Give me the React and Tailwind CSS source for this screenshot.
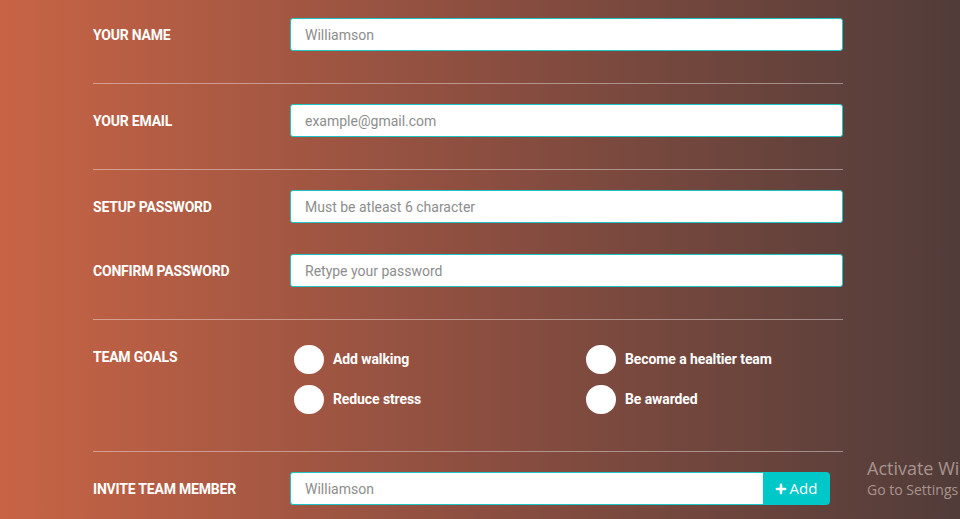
import React from 'react';
import { Plus } from 'lucide-react';

const font = { fontFamily: 'Roboto, "Liberation Sans", sans-serif' };

function Label({ children, className = '' }) {
    return (
        <div className={`w-[197px] shrink-0 text-[14px] font-bold uppercase tracking-[-0.2px] text-white ${className}`}>
            {children}
        </div>
    );
}

function Field({ placeholder }) {
    return (
        <input
            className="h-[33px] flex-1 rounded-[3px] border border-[#1cc6c6] bg-white px-[14px] text-[14px] text-[#555] placeholder:text-[#8d8d8d] outline-none"
            placeholder={placeholder}
        />
    );
}

function Goal({ text }) {
    return (
        <div className="flex items-center">
            <span className="ml-[4px] h-[29px] w-[30px] rounded-full bg-white" />
            <span className="ml-[9px] text-[14px] font-bold tracking-[-0.1px] text-white">{text}</span>
        </div>
    );
}

export default function App() {
    return (
        <div className="relative h-[519px] w-full overflow-hidden bg-gradient-to-r from-[#c86445] via-[#8c4e40] to-[#513c39]" style={font}>
            <div className="ml-[93px] w-[750px]">
                <div className="flex items-center pt-[18px] pb-[32px]">
                    <Label className="pt-[1px]">Your name</Label>
                    <Field placeholder="Williamson" />
                </div>
                <div className="border-t border-white/40" />

                <div className="flex items-center pt-[20px] pb-[32px]">
                    <Label className="pt-[1px]">Your email</Label>
                    <Field placeholder="example@gmail.com" />
                </div>
                <div className="border-t border-white/40" />

                <div className="flex flex-col gap-[31px] pt-[20px] pb-[32px]">
                    <div className="flex items-center">
                        <Label className="pt-[1px]">Setup password</Label>
                        <Field placeholder="Must be atleast 6 character" />
                    </div>
                    <div className="flex items-center">
                        <Label className="pt-[1px]">Confirm password</Label>
                        <Field placeholder="Retype your password" />
                    </div>
                </div>
                <div className="border-t border-white/40" />

                <div className="flex pt-[25px] pb-[37px]">
                    <Label className="pt-[1px] leading-[22px]">Team goals</Label>
                    <div className="grid flex-1 grid-cols-[292px_1fr] gap-y-[11px]">
                        <Goal text="Add walking" />
                        <Goal text="Become a healtier team" />
                        <Goal text="Reduce stress" />
                        <Goal text="Be awarded" />
                    </div>
                </div>
                <div className="border-t border-white/40" />

                <div className="flex items-center pt-[20px]">
                    <Label className="pt-[1px]">Invite team member</Label>
                    <div className="mr-[13px] flex flex-1">
                        <input
                            className="h-[33px] flex-1 rounded-l-[3px] border border-r-0 border-[#1cc6c6] bg-white px-[14px] text-[14px] text-[#555] placeholder:text-[#8d8d8d] outline-none"
                            placeholder="Williamson"
                        />
                        <button
                            className="flex h-[33px] w-[67px] items-center justify-center gap-[2px] rounded-r-[4px] bg-[#00c8c8] pr-[2px] text-[15px] text-white"
                            style={{ fontFamily: '"Open Sans", sans-serif' }}
                        >
                            <Plus size={14} strokeWidth={4.5} />
                            Add
                        </button>
                    </div>
                </div>
            </div>

            <div className="absolute left-[867px] top-[456px] whitespace-nowrap text-[#a8948f]" style={{ fontFamily: '"Open Sans", "Noto Sans", sans-serif' }}>
                <div className="text-[18px] leading-[24px]">Activate Windows</div>
                <div className="text-[14px] leading-[20px]">Go to Settings to activate Windows.</div>
            </div>
        </div>
    );
}
